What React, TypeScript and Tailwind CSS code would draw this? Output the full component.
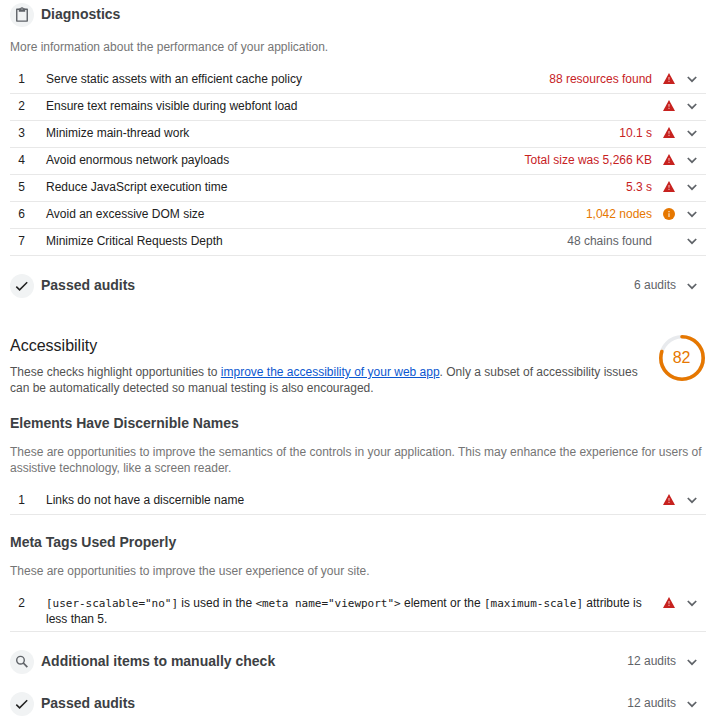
import type { ReactNode } from "react";

type Level = "error" | "warning" | "none";

interface Audit {
  id: number;
  title: ReactNode;
  value?: string;
  level: Level;
}

const diagnostics: Audit[] = [
  { id: 1, title: "Serve static assets with an efficient cache policy", value: "88 resources found", level: "error" },
  { id: 2, title: "Ensure text remains visible during webfont load", level: "error" },
  { id: 3, title: "Minimize main-thread work", value: "10.1 s", level: "error" },
  { id: 4, title: "Avoid enormous network payloads", value: "Total size was 5,266 KB", level: "error" },
  { id: 5, title: "Reduce JavaScript execution time", value: "5.3 s", level: "error" },
  { id: 6, title: "Avoid an excessive DOM size", value: "1,042 nodes", level: "warning" },
  { id: 7, title: "Minimize Critical Requests Depth", value: "48 chains found", level: "none" },
];

const valueColor: Record<Level, string> = {
  error: "text-[#c7221f]",
  warning: "text-[#e67700]",
  none: "text-[#5f6368]",
};

function Chevron() {
  return (
    <svg width="10" height="7" viewBox="0 0 10 7" fill="none" className="shrink-0">
      <path d="M0.8 1 5 5.2 9.2 1" stroke="#5f6368" strokeWidth="1.7" />
    </svg>
  );
}

function LevelIcon({ level }: { level: Level }) {
  if (level === "error") {
    return (
      <svg width="12" height="11" viewBox="0 0 12 11" className="shrink-0">
        <path d="M6 0 12 11H0Z" fill="#c7221f" />
        <path d="M5.4 4h1.2v2.8H5.4zM5.4 7.8h1.2V9H5.4z" fill="#eba9a8" />
      </svg>
    );
  }
  if (level === "warning") {
    return (
      <svg width="12" height="12" viewBox="0 0 12 12" className="shrink-0">
        <circle cx="6" cy="6" r="6" fill="#e67700" />
        <path d="M5.4 3h1.2v1.2H5.4zM5.4 5.3h1.2V9H5.4z" fill="#fbe3c8" />
      </svg>
    );
  }
  return <span className="w-3" />;
}

function AuditRow({ audit }: { audit: Audit }) {
  return (
    <li className="flex min-h-[27px] items-start border-b border-[#e8e8e8] pt-1 pb-1 leading-4 text-[#212121]">
      <span className="w-[23px] shrink-0 text-center">{audit.id}</span>
      <span className="ml-[13px] w-[602px] grow">{audit.title}</span>
      {audit.value && <span className={`whitespace-nowrap ${valueColor[audit.level]}`}>{audit.value}</span>}
      <span className="ml-[11px] flex h-[15px] w-3 items-center">
        <LevelIcon level={audit.level} />
      </span>
      <span className="mr-[9px] ml-3 flex h-[17px] items-center">
        <Chevron />
      </span>
    </li>
  );
}

function Badge({ children }: { children: ReactNode }) {
  return <span className="flex size-6 shrink-0 items-center justify-center rounded-full bg-[#f1f3f4]">{children}</span>;
}

function ClipboardIcon() {
  return (
    <svg width="14" height="16" viewBox="0 0 14 16" fill="none">
      <path d="M1.75 2.2h10.5v11.9H1.75z" stroke="#5f6368" strokeWidth="1.4" strokeLinejoin="round" />
      <path d="M3.8 1.6H5.2a1.9 1.9 0 0 1 3.6 0h1.4v3.1H3.8z" fill="#5f6368" />
      <circle cx="7" cy="2" r=".6" fill="#f1f3f4" />
    </svg>
  );
}

function CheckIcon() {
  return (
    <svg width="14" height="12" viewBox="0 0 14 12" fill="none">
      <path d="M1.3 6.6 4.6 9.9 12.2 2.2" stroke="#212121" strokeWidth="1.5" />
    </svg>
  );
}

function SearchIcon() {
  return (
    <svg width="14" height="14" viewBox="0 0 14 14" fill="none">
      <circle cx="5.5" cy="5.2" r="3.8" stroke="#5f6368" strokeWidth="1.4" />
      <path d="m8.3 8 4 4.2" stroke="#5f6368" strokeWidth="1.7" />
    </svg>
  );
}

function GroupHeader({ icon, title, count }: { icon: ReactNode; title: string; count?: string }) {
  return (
    <div className="flex h-6 items-center">
      <Badge>{icon}</Badge>
      <h2 className="ml-[7px] grow pb-0.5 text-sm leading-5 font-bold text-[#3c4043]">{title}</h2>
      {count && (
        <>
          <span className="pb-0.5 text-[#5f6368]">{count}</span>
          <span className="mr-[9px] ml-[11px] flex pt-px">
            <Chevron />
          </span>
        </>
      )}
    </div>
  );
}

function Code({ children }: { children: string }) {
  return (
    <code className="font-['DejaVu_Sans_Mono',monospace] text-[11px] leading-none tracking-[-0.022px] text-[#212121]">
      {children}
    </code>
  );
}

function ScoreGauge() {
  return (
    <svg width="46" height="46" viewBox="0 0 46 46" className="mt-[3px] shrink-0">
      <circle cx="23" cy="23" r="21.2" fill="none" stroke="#e8eaed" strokeWidth="3.6" />
      <circle
        cx="23"
        cy="23"
        r="21.2"
        fill="none"
        stroke="#e67700"
        strokeWidth="3.6"
        strokeLinecap="round"
        pathLength="100"
        strokeDasharray="80 100"
        transform="rotate(-90 23 23)"
      />
      <text x="22.6" y="28" textAnchor="middle" fontSize="16" fill="#e67700">
        82
      </text>
    </svg>
  );
}

export default function App() {
  return (
    <main className="h-[722px] overflow-hidden bg-white pt-[3px] pr-1.5 pl-2.5 font-['Liberation_Sans',Arial,sans-serif] text-xs leading-4">
      <GroupHeader icon={<ClipboardIcon />} title="Diagnostics" />
      <p className="mt-3 text-[#757575]">More information about the performance of your application.</p>
      <ul className="mt-3">
        {diagnostics.map((audit) => (
          <AuditRow key={audit.id} audit={audit} />
        ))}
      </ul>
      <div className="mt-[18px]">
        <GroupHeader icon={<CheckIcon />} title="Passed audits" count="6 audits" />
      </div>

      <section className="mt-[34px] flex justify-between pr-px">
        <div>
          <h1 className="pt-1 text-base leading-[19px] text-[#212121]">Accessibility</h1>
          <p className="mt-[9px] w-[640px] text-[#525252]">
            These checks highlight opportunities to{" "}
            <a href="#" className="text-[#0b57d0] underline">
              improve the accessibility of your web app
            </a>
            . Only a subset of accessibility issues
            <br />
            can be automatically detected so manual testing is also encouraged.
          </p>
        </div>
        <ScoreGauge />
      </section>

      <h2 className="mt-[17px] text-sm leading-5 font-bold text-[#3c4043]">Elements Have Discernible Names</h2>
      <p className="mt-[11px] text-[#757575]">
        These are opportunities to improve the semantics of the controls in your application. This may enhance the experience for users of
        <br />
        assistive technology, like a screen reader.
      </p>
      <ul className="mt-3">
        <AuditRow audit={{ id: 1, title: "Links do not have a discernible name", level: "error" }} />
      </ul>

      <h2 className="mt-[17px] text-sm leading-5 font-bold text-[#3c4043]">Meta Tags Used Properly</h2>
      <p className="mt-[11px] text-[#757575]">These are opportunities to improve the user experience of your site.</p>
      <ul className="mt-3">
        <AuditRow
          audit={{
            id: 2,
            level: "error",
            title: (
              <>
                <Code>{'[user-scalable="no"]'}</Code> is used in the <Code>{'<meta name="viewport">'}</Code> element or the{" "}
                <Code>[maximum-scale]</Code> attribute is
                <br />
                less than 5.
              </>
            ),
          }}
        />
      </ul>

      <div className="mt-[18px] flex flex-col gap-[18px]">
        <GroupHeader icon={<SearchIcon />} title="Additional items to manually check" count="12 audits" />
        <GroupHeader icon={<CheckIcon />} title="Passed audits" count="12 audits" />
      </div>
    </main>
  );
}
